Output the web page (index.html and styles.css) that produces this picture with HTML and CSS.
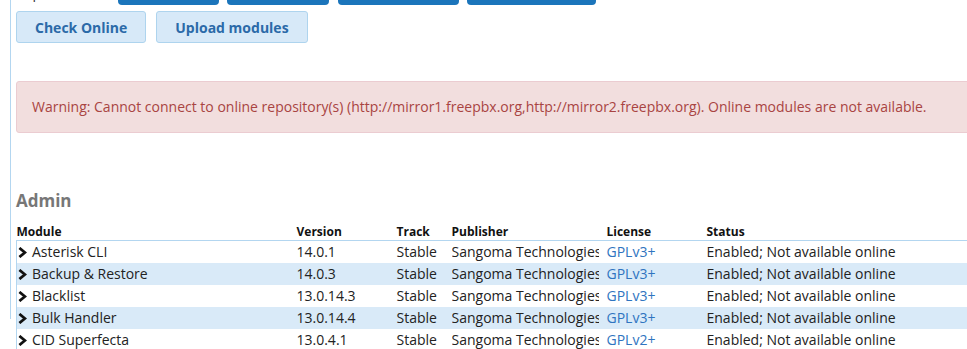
FILE: index.html
```html
<!DOCTYPE html>
<html>
<head>
<meta name="viewport" content="width=device-width, initial-scale=1">
<link rel="stylesheet" href="styles.css">
</head>
<body>

<div class="page">
  <div class="repos">
    <span class="repos-label">Repositories</span>
    <span class="repo-btn b1"></span>
    <span class="repo-btn b2"></span>
    <span class="repo-btn b3"></span>
    <span class="repo-btn b4"></span>
  </div>

  <div class="actions">
    <button class="btn-light">Check Online</button>
    <button class="btn-light">Upload modules</button>
  </div>

  <div class="alert-danger">Warning: Cannot connect to online repository(s) (http://mirror1.freepbx.org,http://mirror2.freepbx.org). Online modules are not available.</div>

  <h3 class="cat">Admin</h3>

  <table class="modules">
    <colgroup>
      <col style="width:280px">
      <col style="width:100px">
      <col style="width:55px">
      <col style="width:155px">
      <col style="width:100px">
      <col>
    </colgroup>
    <thead>
      <tr><th>Module</th><th>Version</th><th>Track</th><th>Publisher</th><th>License</th><th>Status</th></tr>
    </thead>
    <tbody id="rows"></tbody>
  </table>
</div>

<script>
var mods = [
  ["Asterisk CLI", "14.0.1", "GPLv3+"],
  ["Backup &amp; Restore", "14.0.3", "GPLv3+"],
  ["Blacklist", "13.0.14.3", "GPLv3+"],
  ["Bulk Handler", "13.0.14.4", "GPLv3+"],
  ["CID Superfecta", "13.0.4.1", "GPLv2+"]
];
var chevron = '<svg class="chev" width="9" height="11" viewBox="0 0 9 11"><path d="M1.4 1 L6.9 5.5 L1.4 10" fill="none" stroke="#111" stroke-width="2.8"/></svg>';
var html = "";
for (var i = 0; i < mods.length; i++) {
  html += "<tr>" +
    "<td>" + chevron + mods[i][0] + "</td>" +
    "<td>" + mods[i][1] + "</td>" +
    "<td>Stable</td>" +
    "<td><div class='clip'>Sangoma Technologies</div></td>" +
    "<td><a href='#'>" + mods[i][2] + "</a></td>" +
    "<td>Enabled; Not available online</td>" +
    "</tr>";
}
document.getElementById('rows').innerHTML = html;
</script>
</body>
</html>
```

FILE: styles.css
```css
body, html {
  margin: 0;
  height: 100%;
  overflow: hidden;
  font-family: "Open Sans", "DejaVu Sans", sans-serif;
  background: #fff;
}

.page {
  margin-left: 10px;
  border-left: 1px solid #b3d6f0;
  padding-left: 5px;
  width: 1100px;
  height: 100%;
}

.repos {
  display: flex;
  align-items: flex-end;
  margin-top: -30px;
  height: 35px;
}
.repos-label { font-size: 14px; color: #333; width: 102px; line-height: 20px; margin-bottom: 2px; }
.repo-btn {
  background: #1b75bb;
  height: 34px;
  border-radius: 4px;
  margin-right: 8px;
}
.b1 { width: 101px; }
.b2 { width: 102px; margin-right: 9px; }
.b3 { width: 121px; }
.b4 { width: 129px; }

.actions { display: flex; gap: 10px; margin-top: 6px; }
.btn-light {
  font-family: "Open Sans", sans-serif;
  font-size: 14px;
  font-weight: bold;
  color: #2b6aa8;
  background: #d7e9f8;
  border: 1px solid #aed4ee;
  border-radius: 3px;
  height: 32px;
  padding: 0 18px;
}

.alert-danger {
  margin-top: 38px;
  background: #f2dede;
  border: 1px solid #ebccd1;
  border-radius: 3px;
  color: #a94442;
  font-size: 14px;
  line-height: 20px;
  padding: 15px;
}

.cat {
  margin: 58px 0 0;
  font-size: 17px;
  line-height: 20px;
  color: #777;
  font-weight: bold;
}

.modules {
  margin-top: 10px;
  border-collapse: collapse;
  table-layout: fixed;
  width: 1000px;
  font-size: 14px;
  color: #222;
}
.modules th {
  text-align: left;
  font-size: 12px;
  font-weight: bold;
  color: #111;
  padding: 1px 0 0;
  height: 18px;
  line-height: 17px;
  border-bottom: 1px solid #b3d6f0;
}
.modules td {
  padding: 0;
  height: 22px;
  line-height: 22px;
  white-space: nowrap;
}
.modules td:first-child { border-left: 1px solid #b3d6f0; }
.modules tbody tr:nth-child(even) { background: #d9eaf8; }
.modules a { color: #2f74c0; text-decoration: none; }
.clip { width: 147px; overflow: hidden; }
.chev { margin: 0 5px 0 1px; vertical-align: -1px; }
```
